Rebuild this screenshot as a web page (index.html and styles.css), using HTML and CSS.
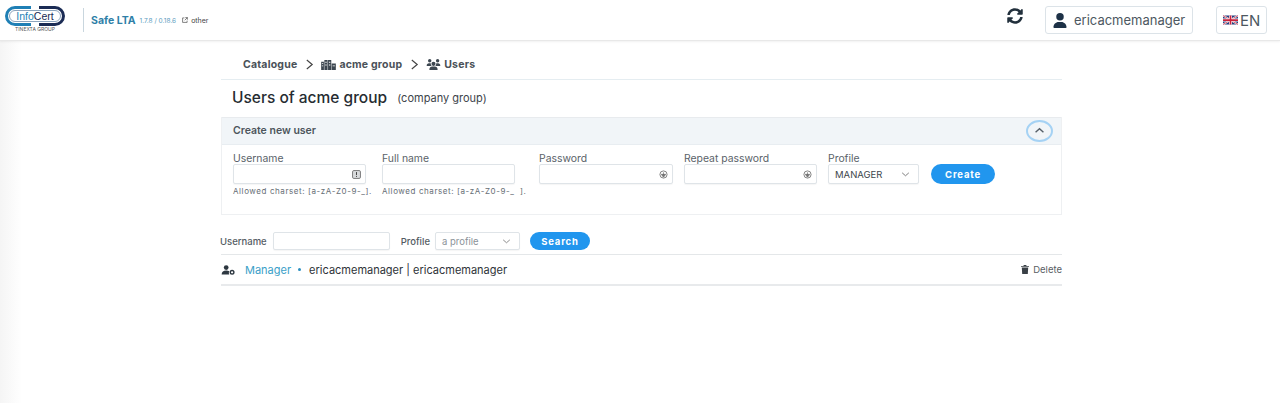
FILE: index.html
```html
<!DOCTYPE html>
<html lang="en">
<head>
<meta charset="utf-8">
<title>Users of acme group</title>
<link rel="stylesheet" href="styles.css">
</head>
<body>
<header class="topbar">
  <div class="brand">
    <div class="logo">
      <svg class="logo-mark" viewBox="0 0 62 20" width="62" height="20">
        <path d="M27 1.500H11a8.500 8.500 0 0 0 0 17h16" fill="none" stroke="#1f7fb5" stroke-width="3"/>
        <path d="M35 1.500h16a8.500 8.500 0 0 1 0 17H35" fill="none" stroke="#1b2c55" stroke-width="3"/>
        <rect x="5.500" y="4.500" width="51" height="11" rx="5.500" fill="#fff" stroke="#7f9ab5" stroke-width=".9"/>
      </svg>
      <span class="logo-word"><span class="logo-a">Info</span><span class="logo-b">Cert</span></span>
      <span class="logo-sub">TINEXTA GROUP</span>
    </div>
    <div class="divider"></div>
    <span class="app-name">Safe LTA</span>
    <span class="app-version">1.7.8 / 0.18.6</span>
    <svg class="ext-icon" viewBox="0 0 10 10" width="6" height="6"><path d="M4 1.500H1v7.500h7.500V6M5.500 1h3.500v3.500M9 1 4.500 5.500" fill="none" stroke="#444" stroke-width="1.100"/></svg>
    <span class="app-other">other</span>
  </div>
  <div class="actions">
    <svg class="sync" viewBox="0 0 512 512" width="16" height="16"><path fill="#22303c" d="M370.720 133.280C339.460 104 298.880 87.960 255.850 88c-77.440.07-144.290 53.170-162.750 126.850-1.340 5.360-6.120 9.150-11.650 9.150H24.100c-7.500 0-13.200-6.810-11.810-14.180C33.930 94.920 134.810 8 256 8c66.450 0 126.790 26.140 171.310 68.690L463.030 40.970C478.150 25.850 504 36.560 504 57.940V192c0 13.250-10.750 24-24 24H345.940c-21.380 0-32.090-25.850-16.970-40.970l41.750-41.750zM32 296h134.060c21.380 0 32.090 25.850 16.970 40.970l-41.750 41.750c31.260 29.280 71.840 45.320 114.870 45.280 77.400-.07 144.280-53.140 162.750-126.850 1.340-5.360 6.120-9.150 11.650-9.150h57.350c7.500 0 13.200 6.810 11.810 14.180C478.070 417.080 377.190 504 256 504c-66.450 0-126.790-26.140-171.310-68.690l-35.720 35.720C33.850 486.150 8 475.440 8 454.060V320c0-13.250 10.750-24 24-24z"/></svg>
    <button class="top-btn user-btn">
      <svg viewBox="0 0 448 512" width="14" height="15"><path fill="#1d3146" d="M224 256a128 128 0 1 0 0-256 128 128 0 1 0 0 256zm-45.700 48C79.800 304 0 383.800 0 482.300 0 498.700 13.300 512 29.700 512h388.600c16.400 0 29.700-13.300 29.700-29.700C448 383.800 368.200 304 269.700 304z"/></svg>
      <span>ericacmemanager</span>
    </button>
    <button class="top-btn lang-btn">
      <svg viewBox="0 0 60 36" width="15" height="10"><rect width="60" height="36" rx="3" fill="#27407f"/><path d="M0 0l60 36M60 0 0 36" stroke="#fff" stroke-width="7"/><path d="M0 0l60 36M60 0 0 36" stroke="#c8213c" stroke-width="3"/><path d="M30 0v36M0 18h60" stroke="#fff" stroke-width="12"/><path d="M30 0v36M0 18h60" stroke="#c8213c" stroke-width="7"/></svg>
      <span>EN</span>
    </button>
  </div>
</header>

<main class="page">
  <nav class="crumbs">
    <span>Catalogue</span>
    <svg class="crumb-sep" viewBox="0 0 10 12" width="9" height="11"><path d="M2 1l6 5-6 5" fill="none" stroke="#444" stroke-width="1.300"/></svg>
    <span class="crumb-item">
      <svg viewBox="0 0 16 12" width="15" height="11"><path fill="#3c4650" fill-rule="evenodd" d="M0 3h3v9H0zM3.500 1h3.500v11H3.500zM7.500 1H11v11H7.500zM11.500 5H16v7h-4.500zM.8 4.500v1h1.400v-1zM.8 7v1h1.400V7zM4.500 3v1H6V3zM4.500 6v1H6V6zM8.500 3v1H10V3zM8.500 6v1H10V6zM12.500 7v1H15V7z"/></svg>
      acme group
    </span>
    <svg class="crumb-sep" viewBox="0 0 10 12" width="9" height="11"><path d="M2 1l6 5-6 5" fill="none" stroke="#444" stroke-width="1.300"/></svg>
    <span class="crumb-item">
      <svg viewBox="0 0 640 512" width="15" height="11"><path fill="#3c4650" d="M144 0a80 80 0 1 1 0 160 80 80 0 1 1 0-160zm368 0a80 80 0 1 1 0 160 80 80 0 1 1 0-160zM0 298.700C0 239.800 47.800 192 106.700 192h42.700c15.900 0 31 3.500 44.600 9.700-1.300 7.200-1.900 14.700-1.900 22.300 0 38.200 16.800 72.500 43.300 96H21.300C9.600 320 0 310.400 0 298.700zM405.300 320h-.7c26.600-23.500 43.300-57.800 43.300-96 0-7.600-.7-15-1.900-22.300 13.600-6.300 28.700-9.700 44.600-9.700h42.700C592.200 192 640 239.800 640 298.700c0 11.800-9.600 21.300-21.300 21.300zM224 224a96 96 0 1 1 192 0 96 96 0 1 1-192 0zM128 485.300C128 411.700 187.700 352 261.300 352h117.300C452.300 352 512 411.700 512 485.300c0 14.700-11.900 26.700-26.700 26.700H154.700c-14.700 0-26.700-11.900-26.700-26.700z"/></svg>
      Users
    </span>
  </nav>

  <h1 class="title">Users of acme group <small>(company group)</small></h1>

  <section class="panel">
    <div class="panel-head">
      <span>Create new user</span>
      <button class="toggle"><svg viewBox="0 0 12 8" width="11" height="7"><path d="M1.500 6 6 2l4.500 4" fill="none" stroke="#555f68" stroke-width="1.600"/></svg></button>
    </div>
    <form class="create-form">
      <div class="field">
        <label>Username</label>
        <div class="input w133">
          <svg class="in-icon" viewBox="0 0 10 10" width="9" height="9"><rect x=".6" y=".6" width="8.800" height="8.800" rx="1.500" fill="#d8dadc" stroke="#666" stroke-width=".9"/><path d="M5 2.300v3.400M5 6.800v1" stroke="#444" stroke-width="1.100"/></svg>
        </div>
        <p class="hint">Allowed charset: [a-zA-Z0-9-_].</p>
      </div>
      <div class="field">
        <label>Full name</label>
        <div class="input w133"></div>
        <p class="hint">Allowed charset: [a-zA-Z0-9-_&nbsp;&nbsp;].</p>
      </div>
      <div class="field">
        <label>Password</label>
        <div class="input w134">
          <svg class="in-icon" viewBox="0 0 10 10" width="9" height="9"><circle cx="5" cy="5" r="4" fill="none" stroke="#777" stroke-width="1"/><path d="M2.500 4.800h5L5 8zM5 2.500v3" fill="#777" stroke="#666" stroke-width=".7"/></svg>
        </div>
      </div>
      <div class="field">
        <label>Repeat password</label>
        <div class="input w133">
          <svg class="in-icon" viewBox="0 0 10 10" width="9" height="9"><circle cx="5" cy="5" r="4" fill="none" stroke="#777" stroke-width="1"/><path d="M2.500 4.800h5L5 8zM5 2.500v3" fill="#777" stroke="#666" stroke-width=".7"/></svg>
        </div>
      </div>
      <div class="field">
        <label>Profile</label>
        <div class="input w91 select">
          <span>MANAGER</span>
          <svg viewBox="0 0 10 6" width="9" height="5"><path d="M1 1l4 3.500L9 1" fill="none" stroke="#666" stroke-width="1"/></svg>
        </div>
      </div>
      <button type="button" class="pill create">Create</button>
    </form>
  </section>

  <div class="search">
    <label>Username</label>
    <div class="input s-user"></div>
    <label class="s-profile">Profile</label>
    <div class="input s-select select muted">
      <span>a profile</span>
      <svg viewBox="0 0 10 6" width="9" height="5"><path d="M1 1l4 3.500L9 1" fill="none" stroke="#777" stroke-width="1"/></svg>
    </div>
    <button type="button" class="pill find">Search</button>
  </div>

  <div class="user-row">
    <svg class="row-icon" viewBox="0 0 15 11" width="14" height="10"><circle cx="5.500" cy="2.800" r="2.600" fill="#2d3740"/><path d="M.5 10.500c0-3 2-4.500 5-4.500 1.500 0 2.600.3 3.400 1-.6 1-.6 2.500 0 3.500z" fill="#2d3740"/><circle cx="12" cy="8" r="2" fill="none" stroke="#2d3740" stroke-width="1.500"/></svg>
    <a class="role">Manager</a>
    <i class="dot"></i>
    <span class="names">ericacmemanager | ericacmemanager</span>
    <span class="delete">
      <svg viewBox="0 0 10 11" width="8" height="9"><path fill="#3a4046" d="M3.500 0h3l.5 1h3v1.200H0V1h3zM1 3h8l-.5 8h-7z"/></svg>
      Delete
    </span>
  </div>
</main>
</body>
</html>
```
FILE: styles.css
```css
* { box-sizing: border-box; }
html, body { margin: 0; height: 100%; }
body {
  font-family: Inter, "Open Sans", "Liberation Sans", sans-serif;
  color: #2b3238;
  background: linear-gradient(90deg, #f5f5f5 0, #fff 22px);
  overflow: hidden;
}
.topbar {
  height: 41px;
  display: flex;
  justify-content: space-between;
  align-items: flex-start;
  background: #fff;
  border-bottom: 1px solid #e8e8e8;
  box-shadow: 0 1px 2px rgba(0,0,0,.06);
}
.brand { display: flex; align-items: center; height: 40px; padding-left: 4px; }
.logo { position: relative; width: 62px; height: 30px; }
.logo-mark { position: absolute; left: 0; top: 1px; }
.logo-word { position: absolute; left: 0; width: 62px; top: 5px; text-align: center; font-size: 10.500px; line-height: 12px; font-family: "Liberation Sans", sans-serif; }
.logo-a { color: #1f7fb5; }
.logo-b { color: #1b2c55; }
.logo-sub { position: absolute; left: 0; width: 62px; top: 21px; text-align: center; font-size: 5px; line-height: 6px; color: #555; white-space: nowrap; }
.divider { width: 1px; height: 24px; background: #c9d6de; margin: 0 7px 0 17px; }
.app-name { font-size: 10.500px; font-weight: 700; color: #2f7fa8; }
.app-version { font-size: 6.500px; color: #5b9cc0; margin: 2px 6px 0 4px; white-space: nowrap; }
.ext-icon { margin-right: 3px; }
.app-other { font-size: 7px; color: #444; }
.actions { display: flex; align-items: flex-start; padding: 6px 13px 0 0; }
.sync { margin: 2px 22px 0 0; }
.top-btn {
  height: 28px;
  display: flex;
  align-items: center;
  background: #fff;
  border: 1px solid #dce3e8;
  border-radius: 3px;
  font: inherit;
  color: #4d5861;
  padding: 0;
}
.user-btn { width: 148px; gap: 7px; padding-left: 7px; font-size: 13px; margin-right: 23px; white-space: nowrap; }
.lang-btn { width: 51px; gap: 2px; padding-left: 6px; font-size: 15px; }

.page { width: 841px; margin-left: 221px; }
.crumbs {
  height: 39px;
  padding: 9px 0 0 22px;
  display: flex;
  align-items: center;
  gap: 8px;
  border-bottom: 1px solid #e5edf1;
  font-size: 10.500px;
  letter-spacing: .2px;
  font-weight: 700;
  color: #4a5158;
}
.crumb-sep { margin-right: -1px; }
.crumb-item { display: flex; align-items: center; gap: 3px; }
.title {
  margin: 0;
  height: 37px;
  padding: 9px 0 0 11px;
  font-size: 15.500px;
  line-height: 18px;
  font-weight: 500;
  color: #262c31;
}
.title small { font-size: 11px; font-weight: 400; color: #3d444a; margin-left: 6px; vertical-align: 1px; }

.panel { height: 98px; border: 1px solid #eef0f2; border-top: 0; }
.panel-head {
  height: 28px;
  display: flex;
  align-items: center;
  justify-content: space-between;
  padding: 0 8px 1px 11px;
  background: #f1f5f8;
  border-top: 1px solid #e8ebee;
  border-bottom: 1px solid #e8edf1;
  font-size: 10.500px;
  font-weight: 600;
  color: #4d555c;
}
.toggle {
  width: 27px;
  height: 22px;
  display: flex;
  align-items: center;
  justify-content: center;
  padding: 0;
  background: #f1f5f8;
  border: 2px solid #a5d2f4;
  border-radius: 50%;
}
.create-form {
  display: grid;
  grid-template-columns: 149px 157px 145px 144px 103px auto;
  padding: 9px 0 0 11px;
  align-items: start;
}
.field label { display: block; font-size: 10.400px; line-height: 10px; color: #5a6269; }
.input {
  height: 20px;
  display: flex;
  align-items: center;
  justify-content: flex-end;
  padding: 0 4px;
  background: #fff;
  border: 1px solid #dfe4e8;
  border-radius: 2px;
  box-shadow: 0 1px 1px rgba(0,0,0,.04);
}
.w133 { width: 133px; }
.w134 { width: 134px; }
.w91 { width: 91px; }
.in-icon { display: block; }
.select { justify-content: space-between; padding: 0 8px 0 6px; font-size: 9.500px; color: #40474d; }
.hint { margin: 3px 0 0; font-size: 8px; letter-spacing: .58px; line-height: 9px; color: #666e75; white-space: nowrap; }
.pill {
  height: 20px;
  border: 0;
  border-radius: 10px;
  background: #2196ee;
  color: #fff;
  font: inherit;
  font-size: 9.500px;
  font-weight: 700;
  letter-spacing: .8px;
  padding: 0;
}
.create { width: 64px; margin-top: 10px; }

.search { display: flex; align-items: center; height: 18px; margin-top: 17px; margin-left: -1px; font-size: 9.500px; color: #555c63; }
.search label { font-weight: 500; }
.s-user { width: 117px; height: 18px; margin-left: 6px; }
.s-profile { margin-left: 11px; }
.s-select { width: 85px; height: 18px; margin-left: 5px; }
.muted { color: #8b9299; font-size: 9.500px; }
.find { width: 60px; height: 18px; margin-left: 10px; }

.user-row {
  height: 32px;
  margin-top: 4px;
  display: flex;
  align-items: center;
  border-top: 1px solid #e4e7e9;
  border-bottom: 2px solid #e8eaec;
  font-size: 11px;
}
.row-icon { margin-right: 10px; }
.role { color: #3aa0c8; }
.dot { width: 3px; height: 3px; border-radius: 50%; background: #2b8fc0; margin: 0 8px 0 7px; }
.names { color: #2e3338; }
.delete { margin-left: auto; display: flex; align-items: center; gap: 4px; font-size: 9.500px; color: #5a6066; }
```
